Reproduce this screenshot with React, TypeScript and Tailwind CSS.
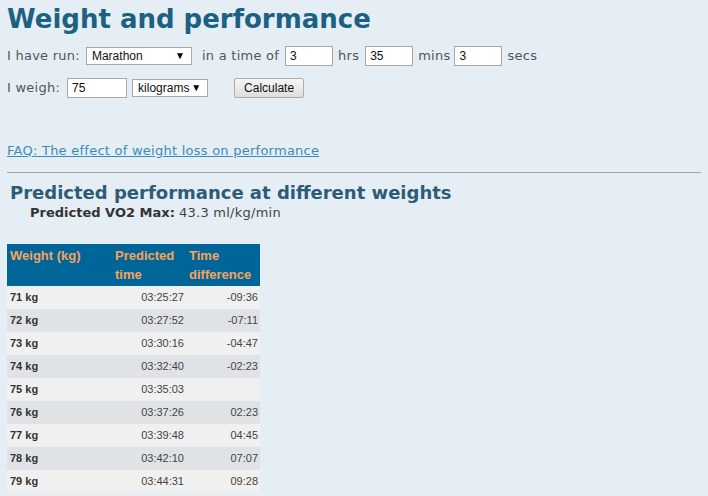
import React from "react";

const rows: [string, string, string][] = [
  ["71 kg", "03:25:27", "-09:36"],
  ["72 kg", "03:27:52", "-07:11"],
  ["73 kg", "03:30:16", "-04:47"],
  ["74 kg", "03:32:40", "-02:23"],
  ["75 kg", "03:35:03", ""],
  ["76 kg", "03:37:26", "02:23"],
  ["77 kg", "03:39:48", "04:45"],
  ["78 kg", "03:42:10", "07:07"],
  ["79 kg", "03:44:31", "09:28"],
];

function Select({ value, width }: { value: string; width: string }) {
  return (
    <div
      className={`flex h-[18px] ${width} items-center justify-between border border-[#a9a9a9] bg-white pl-[5px] pr-[6px] font-['Liberation_Sans',Arial,sans-serif] text-[12px] text-[#111]`}
    >
      <span>{value}</span>
      <span className="text-[10px] leading-none text-black">▼</span>
    </div>
  );
}

function Input({ value, width }: { value: string; width: string }) {
  return (
    <div
      className={`flex h-[20px] ${width} items-center border border-[#a9a9a9] bg-white pl-[4px] font-['Liberation_Sans',Arial,sans-serif] text-[12px] text-[#111]`}
    >
      {value}
    </div>
  );
}

export default function App() {
  return (
    <div className="min-h-screen bg-[#e6eef5] px-[7px] font-['DejaVu_Sans',Verdana,sans-serif] text-[13px] text-[#555]">
      <h1 className="pt-[4px] text-[26px] font-bold leading-[30px] text-[#1d6182]">
        Weight and performance
      </h1>

      <div className="mt-[12px] flex h-[20px] items-center tracking-[0.25px]">
        <span>I have run:</span>
        <div className="ml-[6px] tracking-normal">
          <Select value="Marathon" width="w-[106px]" />
        </div>
        <span className="ml-[10px]">in a time of</span>
        <div className="ml-[6px] tracking-normal">
          <Input value="3" width="w-[48px]" />
        </div>
        <span className="ml-[5px]">hrs</span>
        <div className="ml-[6px] tracking-normal">
          <Input value="35" width="w-[48px]" />
        </div>
        <span className="ml-[5px]">mins</span>
        <div className="ml-[4px] tracking-normal">
          <Input value="3" width="w-[48px]" />
        </div>
        <span className="ml-[5px]">secs</span>
      </div>

      <div className="mt-[12px] flex h-[20px] items-center tracking-[0.25px]">
        <span>I weigh:</span>
        <div className="ml-[7px] tracking-normal">
          <Input value="75" width="w-[60px]" />
        </div>
        <div className="ml-[5px] tracking-normal">
          <Select value="kilograms" width="w-[76px]" />
        </div>
        <button className="ml-[26px] flex h-[20px] w-[70px] items-center justify-center rounded-[2px] border border-[#adadad] bg-gradient-to-b from-[#f6f6f6] to-[#dedede] font-['Liberation_Sans',Arial,sans-serif] text-[12px] tracking-normal text-[#111]">
          Calculate
        </button>
      </div>

      <div className="mt-[45px] leading-[16px] tracking-[0.25px]">
        <a href="#" className="text-[#3a8db5] underline">
          FAQ: The effect of weight loss on performance
        </a>
      </div>

      <div className="mt-[13px] border-t border-[#a3a3a3]" />

      <h2 className="pl-[3px] pt-[9px] text-[18px] font-bold leading-[22px] text-[#2e5b75]">
        Predicted performance at different weights
      </h2>
      <div className="pl-[23px] pt-[1px] leading-[16px] text-[#444]">
        <span className="font-bold text-[#333]">Predicted VO2 Max:</span>{" "}
        <span className="tracking-[0.25px]">43.3 ml/kg/min</span>
      </div>

      <table className="mt-[23px] w-[253px] border-collapse font-['Liberation_Sans',Arial,sans-serif]">
        <thead>
          <tr className="bg-[#006699] text-left align-top text-[13px] font-bold leading-[19px] text-[#f9a25b]">
            <th className="w-[105px] px-[3px] pb-[2px] pt-[2px]">Weight (kg)</th>
            <th className="w-[74px] px-[3px] pb-[2px] pt-[2px]">Predicted time</th>
            <th className="w-[74px] px-[3px] pb-[2px] pt-[2px]">Time difference</th>
          </tr>
        </thead>
        <tbody>
          {rows.map((r, i) => (
            <tr
              key={r[0]}
              className={`h-[23px] text-[11px] ${i % 2 === 0 ? "bg-[#f0f0f0]" : "bg-[#dfe3e6]"}`}
            >
              <td className="px-[3px] font-bold text-[#333]">{r[0]}</td>
              <td className="pr-[2px] text-right text-[#444]">{r[1]}</td>
              <td className="pr-[2px] text-right text-[#444]">{r[2]}</td>
            </tr>
          ))}
        </tbody>
      </table>
    </div>
  );
}
